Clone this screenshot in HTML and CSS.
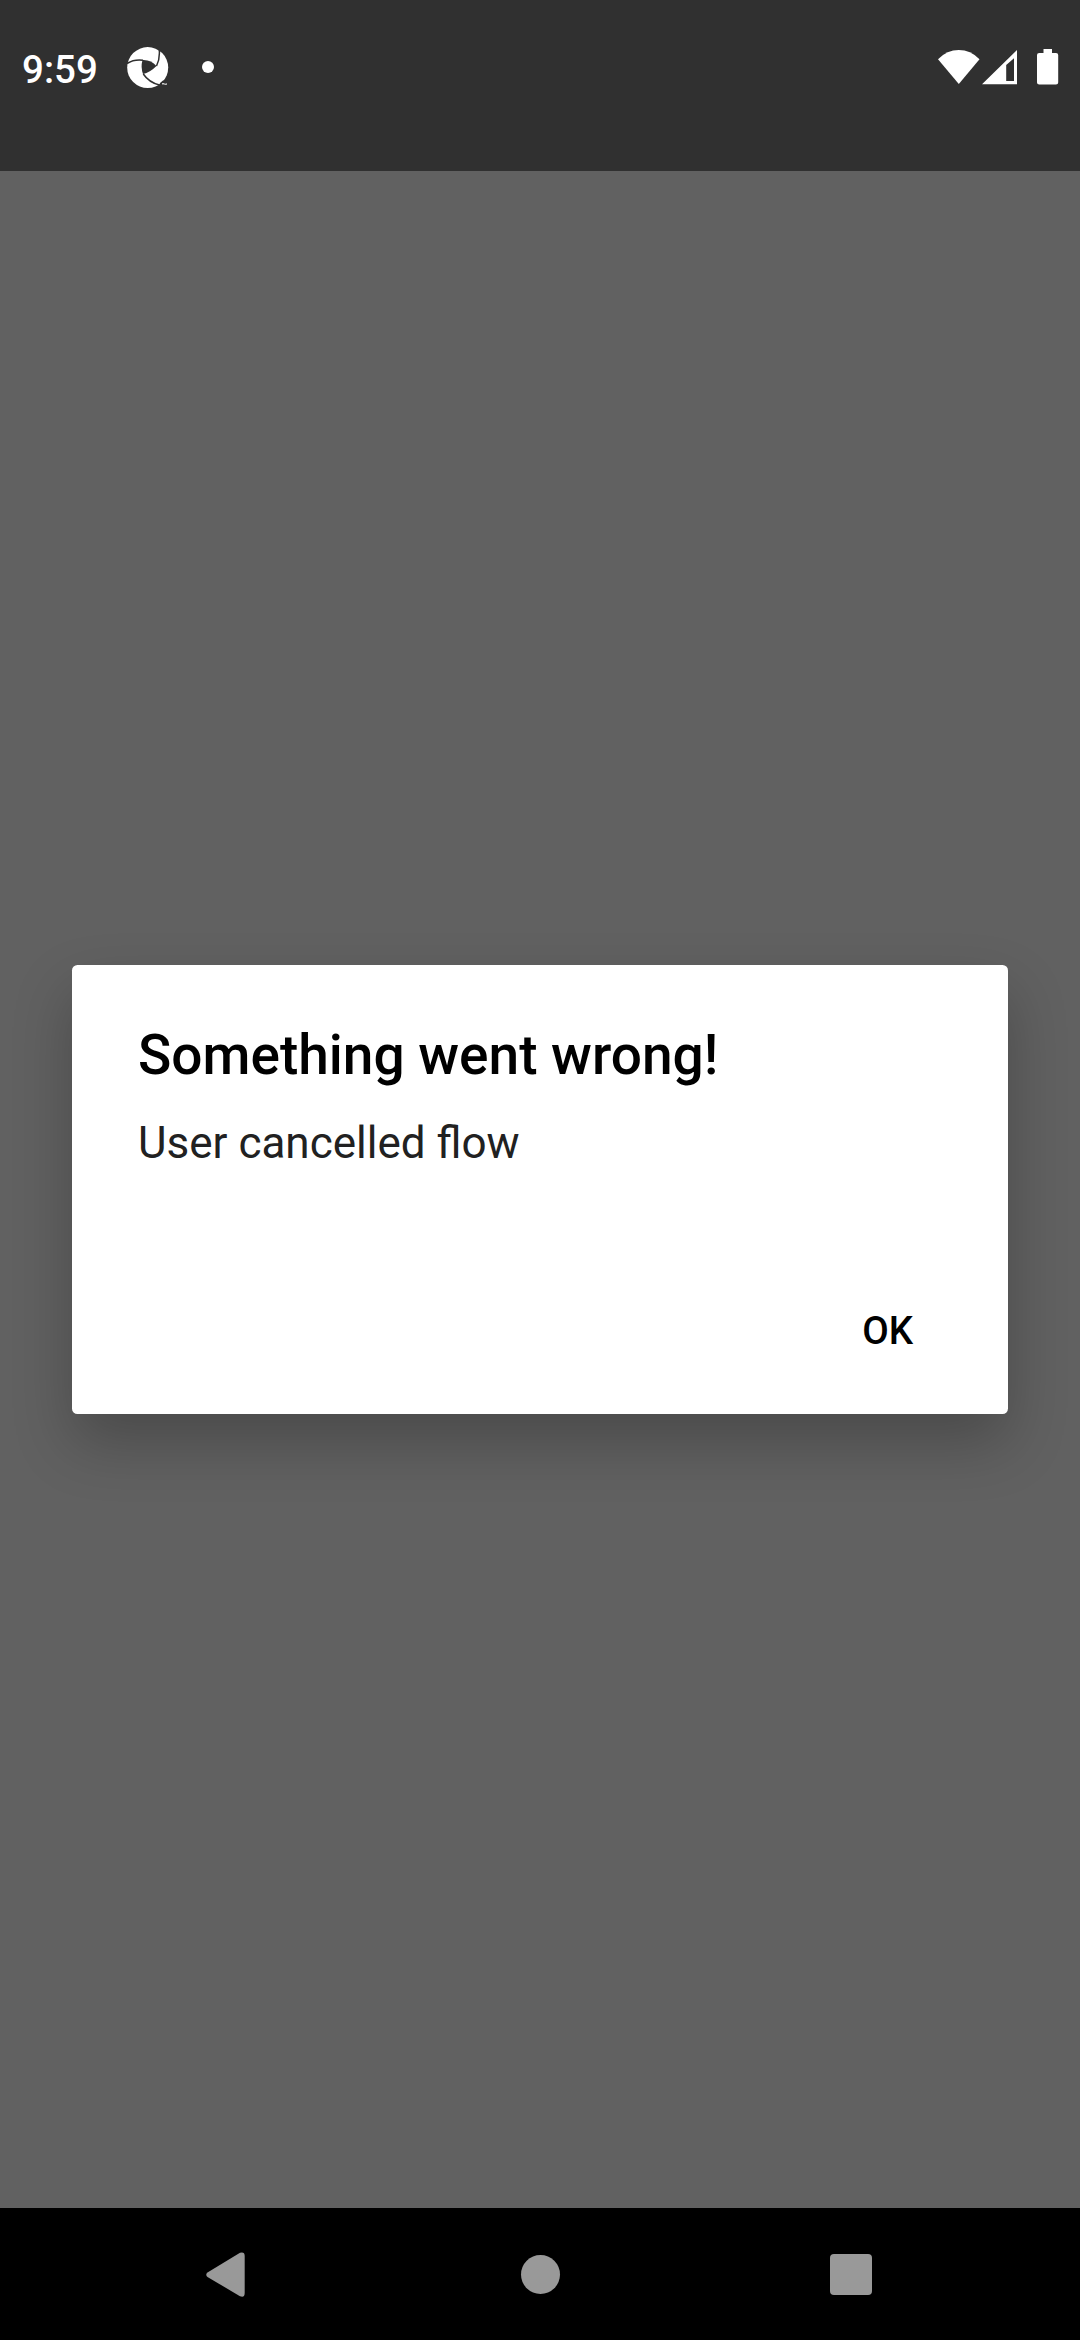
FILE: index.html
```html
<!DOCTYPE html>
<html lang="en">
<head>
<meta charset="utf-8">
<title>Something went wrong!</title>
<link rel="stylesheet" href="styles.css">
</head>
<body>
<div class="screen">
  <header class="status-bar">
    <span class="clock">9:59</span>
    <svg class="aperture" viewBox="0 0 42 42" aria-hidden="true">
      <circle cx="20.700" cy="20.600" r="20.500" fill="#fff"/>
      <path d="M15.500 13Q24 12.500 29.500 19Q23 25.500 16 27Q13.500 20 15.500 13Z" fill="#303030"/>
      <path d="M0 16.500Q7 12 16 13.200M29.500 19Q33 12 32.300 3M16.300 27Q22 35.500 32.500 38" fill="none" stroke="#303030" stroke-width="1.500"/>
      <path d="M33 36L36 33.500L41 34V40H32Z" fill="#303030"/>
      <path d="M35 36.500H37M36 36.500V38M37.800 38V36.500L38.600 37.500L39.300 36.500V38" fill="none" stroke="#fff" stroke-width=".7"/>
    </svg>
    <span class="dot"></span>
    <span class="indicators">
      <svg class="wifi" viewBox="0 0 42 36" aria-hidden="true"><path d="M0 10.200Q9 1 20.800 1T41.500 10.200L20.800 35Z" fill="#fff"/></svg>
      <svg class="signal" viewBox="0 0 36 36" aria-hidden="true"><path fill-rule="evenodd" d="M0 35.200L35 1V35.200ZM24.200 16V32H32V9.200Z" fill="#fff"/></svg>
      <svg class="battery" viewBox="0 0 22 36" aria-hidden="true"><path d="M6.500 0H15V4H19Q21.200 4 21.200 6V33.500Q21.200 35.500 19 35.500H2.200Q0 35.500 0 33.500V6Q0 4 2.200 4H6.500Z" fill="#fff"/></svg>
    </span>
  </header>
  <main class="scrim">
    <section class="dialog" role="alertdialog">
      <h1 class="title">Something went wrong!</h1>
      <p class="message">User cancelled flow</p>
      <div class="actions"><button class="ok">OK</button></div>
    </section>
  </main>
  <nav class="nav-bar">
    <svg class="back" viewBox="0 0 39 46" aria-hidden="true"><path d="M1.500 20.500L34 .800Q38.700 -.500 38.700 4V41Q38.700 46 34 44.200L1.500 25Q-1 22.700 1.500 20.500Z" fill="#999"/></svg>
    <span class="home"></span>
    <span class="recents"></span>
  </nav>
</div>
</body>
</html>
```
FILE: styles.css
```css
* { box-sizing: border-box; }
body { margin: 0; font-family: Roboto, sans-serif; }
.screen {
  width: 1080px;
  height: 2340px;
  display: flex;
  flex-direction: column;
  background: #616161;
  overflow: hidden;
}
.status-bar {
  height: 171px;
  flex: none;
  display: flex;
  align-items: flex-start;
  padding: 47px 21px 0 22px;
  background: #303030;
}
.clock {
  width: 105px;
  font-size: 38.5px;
  line-height: 45px;
  font-weight: 500;
  color: #fff;
}
.aperture { width: 42px; height: 42px; }
.dot {
  width: 12px;
  height: 12px;
  margin: 14px 0 0 33px;
  border-radius: 50%;
  background: #fff;
}
.indicators { display: flex; margin-left: auto; padding-top: 2px; }
.wifi { width: 42px; height: 36px; }
.signal { width: 36px; height: 36px; margin-left: 2px; }
.battery { width: 22px; height: 36px; margin-left: 19px; }
.scrim { flex: 1; padding: 794px 72px 0; }
.dialog {
  height: 449px;
  display: flex;
  flex-direction: column;
  padding: 58px 66px 0;
  border-radius: 5.5px;
  background: #fff;
  box-shadow: 0 28px 60px rgba(0, 0, 0, .24);
}
.title {
  margin: 0;
  font-size: 55px;
  line-height: 64px;
  font-weight: 500;
  color: #000;
}
.message {
  margin: 30px 0 0;
  font-size: 44px;
  line-height: 52px;
  color: #212121;
}
.actions { display: flex; justify-content: flex-end; margin-top: 103px; }
.ok {
  padding: 0 29px;
  border: 0;
  background: none;
  font: 500 38.5px/117px Roboto, sans-serif;
  color: #000;
}
.nav-bar {
  height: 132px;
  flex: none;
  display: flex;
  align-items: center;
  padding: 1px 208.5px 0 206px;
  justify-content: space-between;
  background: #000;
}
.back { width: 39px; height: 46px; }
.home { width: 39px; height: 39px; margin-left: 6px; border-radius: 50%; background: #999; }
.recents { width: 41.5px; height: 41.5px; border-radius: 4px; background: #999; }
```
